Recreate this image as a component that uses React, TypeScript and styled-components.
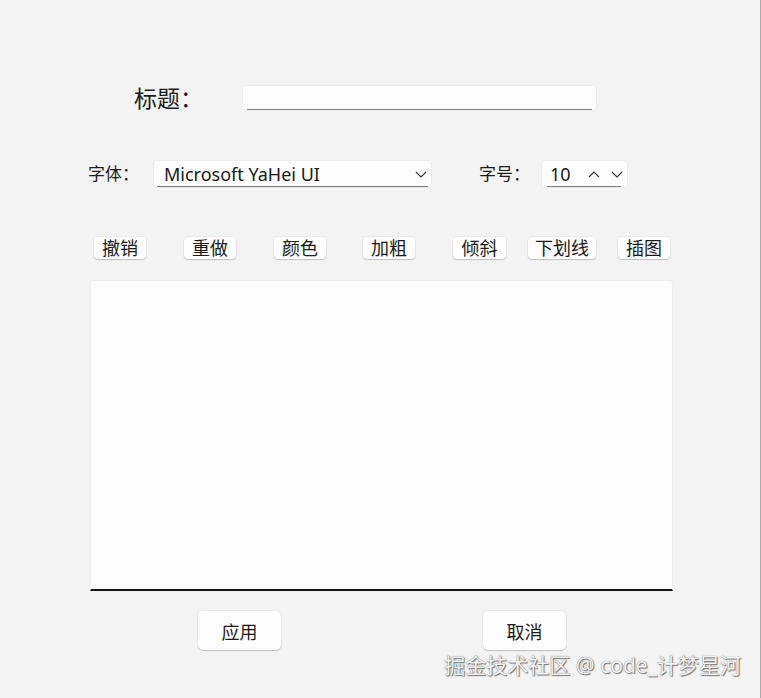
import React from "react";
import styled, { createGlobalStyle } from "styled-components";

const GlobalStyle = createGlobalStyle`
  html, body {
    margin: 0;
    padding: 0;
    background: #f3f3f3;
  }
  * {
    box-sizing: border-box;
  }
`;

const FONT = `"Noto Sans", "Noto Sans CJK SC", sans-serif`;

const tools = [
  { label: "撤销", gap: 0, width: 52 },
  { label: "重做", gap: 38, width: 52 },
  { label: "颜色", gap: 38, width: 52 },
  { label: "加粗", gap: 37, width: 52 },
  { label: "倾斜", gap: 38, width: 53 },
  { label: "下划线", gap: 22, width: 68 },
  { label: "插图", gap: 22, width: 52 },
];

const Chevron = ({ up }: { up?: boolean }) => (
  <svg width="12" height="7" viewBox="0 0 12 7">
    <polyline
      points={up ? "1,6 6,1 11,6" : "1,1 6,6 11,1"}
      fill="none"
      stroke="#333"
      strokeWidth="1.1"
    />
  </svg>
);

export default function App() {
  return (
    <>
      <GlobalStyle />
      <Window>
        <TitleRow>
          <TitleLabel>标题：</TitleLabel>
          <LineEdit />
        </TitleRow>

        <FontRow>
          <FieldLabel $width={65}>字体：</FieldLabel>
          <Combo>
            <ComboText>Microsoft YaHei UI</ComboText>
            <Chevron />
          </Combo>
          <FieldLabel $width={62} $offset={47}>
            字号：
          </FieldLabel>
          <Spin>
            <ComboText>10</ComboText>
            <SpinArrows>
              <Chevron up />
              <Chevron />
            </SpinArrows>
          </Spin>
        </FontRow>

        <ToolBar>
          {tools.map((t) => (
            <ToolButton key={t.label} $gap={t.gap} $width={t.width}>
              {t.label}
            </ToolButton>
          ))}
        </ToolBar>

        <Editor />

        <ActionRow>
          <ActionButton>应用</ActionButton>
          <ActionButton $offset={202}>取消</ActionButton>
        </ActionRow>

        <Watermark>掘金技术社区 @ code_计梦星河</Watermark>
      </Window>
    </>
  );
}

const Window = styled.div`
  position: relative;
  width: 761px;
  height: 698px;
  display: flex;
  flex-direction: column;
  padding-top: 85px;
  background: #f3f3f3;
  border-right: 1px solid #ababab;
  font-family: ${FONT};
  color: #1b1b1b;
  overflow: hidden;
`;

const TitleRow = styled.div`
  display: flex;
  align-items: center;
  height: 26px;
  padding-left: 134px;
`;

const TitleLabel = styled.span`
  width: 108px;
  font-size: 23px;
  line-height: 26px;
`;

const LineEdit = styled.div`
  width: 355px;
  height: 26px;
  border-radius: 4px;
  border: 1px solid #ececec;
  background:
    linear-gradient(#858585, #858585) center bottom / calc(100% - 8px) 1px no-repeat,
    #fcfcfc;
`;

const FontRow = styled.div`
  display: flex;
  align-items: center;
  height: 28px;
  margin-top: 49px;
  padding-left: 88px;
`;

const FieldLabel = styled.span<{ $width: number; $offset?: number }>`
  width: ${(p) => p.$width}px;
  margin-left: ${(p) => p.$offset ?? 0}px;
  font-size: 17px;
  line-height: 28px;
`;

const Combo = styled.div`
  display: flex;
  align-items: center;
  justify-content: space-between;
  width: 279px;
  height: 28px;
  padding: 0 4px 0 10px;
  border-radius: 4px;
  border: 1px solid #ececec;
  background:
    linear-gradient(#7a7a7a, #7a7a7a) center bottom / calc(100% - 6px) 1px no-repeat,
    #fdfdfd;
`;

const ComboText = styled.span`
  font-size: 18px;
  line-height: 28px;
  color: #1a1a1a;
`;

const Spin = styled(Combo)`
  width: 87px;
  padding: 0 4px 0 8px;
  background:
    linear-gradient(#7a7a7a, #7a7a7a) 5px bottom / 74px 1px no-repeat,
    #fdfdfd;
`;

const SpinArrows = styled.div`
  display: flex;
  align-items: center;
  gap: 11px;
`;

const ToolBar = styled.div`
  display: flex;
  align-items: center;
  height: 22px;
  margin-top: 49px;
  padding-left: 94px;
`;

const ToolButton = styled.div<{ $gap: number; $width: number }>`
  display: flex;
  align-items: center;
  justify-content: center;
  width: ${(p) => p.$width}px;
  height: 22px;
  margin-left: ${(p) => p.$gap}px;
  border-radius: 4px;
  background: #fdfdfd;
  box-shadow: 0 1px 1px rgba(0, 0, 0, 0.18), 0 0 0 1px rgba(0, 0, 0, 0.04);
  font-size: 18px;
  line-height: 22px;
  color: #1a1a1a;
`;

const Editor = styled.div`
  width: 583px;
  height: 311px;
  margin-top: 21px;
  margin-left: 90px;
  border-radius: 4px 4px 0 0;
  border: 1px solid #ededed;
  border-bottom: 2px solid #151515;
  background: #fcfcfc;
`;

const ActionRow = styled.div`
  display: flex;
  margin-top: 20px;
  padding-left: 198px;
`;

const ActionButton = styled.div<{ $offset?: number }>`
  display: flex;
  align-items: center;
  justify-content: center;
  width: 83px;
  height: 39px;
  margin-left: ${(p) => p.$offset ?? 0}px;
  border-radius: 5px;
  background: #fdfdfd;
  box-shadow: 0 1px 1px rgba(0, 0, 0, 0.18), 0 0 0 1px rgba(0, 0, 0, 0.04);
  font-size: 18px;
  color: #1a1a1a;
`;

const Watermark = styled.div`
  position: absolute;
  right: 19px;
  top: 650px;
  font-size: 21px;
  line-height: 30px;
  color: #f4f4f4;
  text-shadow: 0 0 1px #555, 1px 1px 1px #777;
  white-space: nowrap;
`;
